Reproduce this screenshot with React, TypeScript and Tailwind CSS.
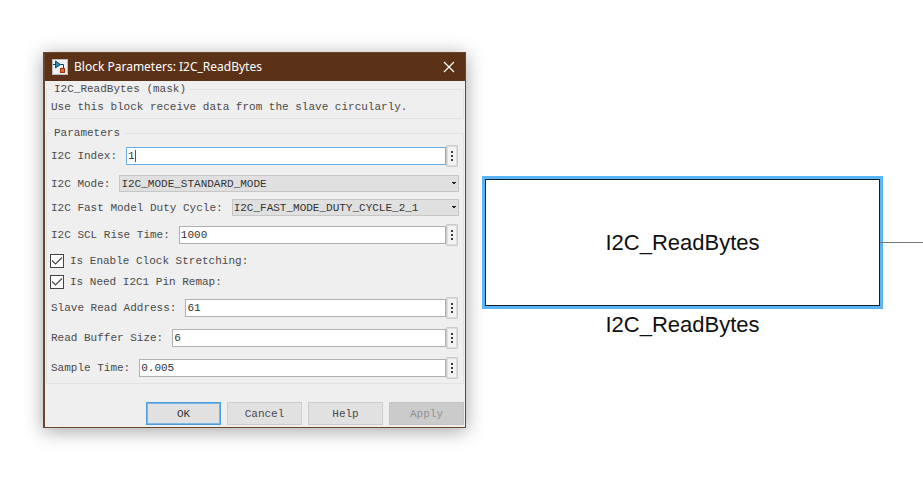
import { useState } from "react";

const MONO = "font-['Liberation_Mono',monospace] text-[11px] leading-[14px]";

function MoreButton({ label }: { label: string }) {
  return (
    <button
      type="button"
      aria-label={label}
      className="flex h-[22px] w-3 shrink-0 items-center justify-center rounded-[1px] border border-[#cbcbcb] bg-[#f3f3f3] ring-1 ring-[#dedede] ring-inset"
    >
      <svg width="4" height="12" viewBox="0 0 4 12" fill="#3a3a40">
        <rect x="1" y="1" width="2" height="2" />
        <rect x="1" y="5" width="2" height="2" />
        <rect x="1" y="9" width="2" height="2" />
      </svg>
    </button>
  );
}

function TextRow({ id, label, initial, focused }: { id: string; label: string; initial: string; focused?: boolean }) {
  const [value, setValue] = useState(initial);
  return (
    <div className="flex h-[22px] items-center gap-[9px]">
      <label htmlFor={id} className="shrink-0">
        {label}
      </label>
      <div className="flex min-w-0 flex-1 items-center pr-px">
        <div
          className={`flex h-[18px] min-w-0 flex-1 items-center border bg-white pl-px ${
            focused ? "border-[#6aaee6]" : "border-[#b0b0b0]"
          }`}
        >
          <input
            id={id}
            value={value}
            onChange={(e) => setValue(e.target.value)}
            size={1}
            className={`min-w-0 bg-transparent text-[#333] outline-none ${focused ? "w-[7px]" : "flex-1"}`}
          />
          {focused && <span className="h-3 w-px bg-[#555]" />}
        </div>
        <MoreButton label={`${label} options`} />
      </div>
    </div>
  );
}

function SelectRow({ id, label, value }: { id: string; label: string; value: string }) {
  return (
    <div className="flex h-[17px] items-center gap-[9px]">
      <label htmlFor={id} className="shrink-0">
        {label}
      </label>
      <div className="relative h-[17px] min-w-0 flex-1">
        <select
          id={id}
          defaultValue={value}
          className="block h-full w-full appearance-none border border-[#c6c6c6] bg-[#e0e0e0] pl-px text-[#333]"
        >
          <option>{value}</option>
        </select>
        <svg className="pointer-events-none absolute top-[7px] right-[3px]" width="4" height="2" viewBox="0 0 4 2" fill="#222">
          <path d="M0 0h4v1H3v1H1V1H0z" />
        </svg>
      </div>
    </div>
  );
}

function CheckRow({ label }: { label: string }) {
  return (
    <label className="-ml-px flex h-[14px] items-center gap-[6px]">
      <span className="relative size-[14px]">
        <input
          type="checkbox"
          defaultChecked
          className="peer block size-full appearance-none border border-[#444] bg-white"
        />
        <svg
          className="pointer-events-none absolute inset-0 hidden peer-checked:block"
          width="14"
          height="14"
          viewBox="0 0 14 14"
          fill="none"
          stroke="#444"
          strokeWidth="1.100"
        >
          <path d="M2 6.500l3.500 3.500L12 3.500" />
        </svg>
      </span>
      {label}
    </label>
  );
}

function BlockIcon() {
  return (
    <svg width="16" height="16" viewBox="0 0 16 16">
      <rect width="16" height="16" fill="#b9bdc0" />
      <rect x="1" y="1" width="14" height="14" fill="#f1f2f3" />
      <path d="M1 5.500h2M8 5.500h3.500V9" fill="none" stroke="#1f3d55" />
      <path d="M3.500 2l5 3.500-5 3.500z" fill="#2588c0" stroke="#144d78" />
      <rect x="8.500" y="9.500" width="4" height="4" fill="#ee6a35" stroke="#a82d0c" />
    </svg>
  );
}

const BUTTON = "h-[23px] w-[75px] border text-center";

function ParametersDialog() {
  return (
    <section
      aria-label="Block Parameters"
      className="w-[423px] shrink-0 border border-l-2 border-[#6b452c] bg-[#efefef] shadow-[0_3px_18px_rgba(0,0,0,0.36)]"
    >
      <header className="flex h-7 items-center bg-[#5b3217] pr-[10px] pl-[7px] text-white">
        <BlockIcon />
        <h1 className="ml-[6px] flex-1 font-['Noto_Sans',sans-serif] text-[12px] leading-5">
          Block Parameters: I2C_ReadBytes
        </h1>
        <button type="button" aria-label="Close">
          <svg width="12" height="12" viewBox="0 0 12 12" fill="none" stroke="white" strokeWidth="1.200">
            <path d="M1 1l10 10M11 1L1 11" />
          </svg>
        </button>
      </header>
      <form className={`${MONO} px-px pt-px pb-[2px] text-[#4a4a4a]`} onSubmit={(e) => e.preventDefault()}>
        <fieldset className="border border-[#e2e2e2] pb-1 pl-1">
          <legend className="px-[3px]">I2C_ReadBytes (mask)</legend>
          <p className="pt-1">Use this block receive data from the slave circularly.</p>
        </fieldset>
        <fieldset className="mt-[7px] border border-[#e2e2e2] pr-1 pb-1 pl-1">
          <legend className="px-[3px]">Parameters</legend>
          <div className="flex flex-col gap-2 pt-[5px]">
            <TextRow id="index" label="I2C Index:" initial="1" focused />
            <div className="flex flex-col gap-[7px]">
              <SelectRow id="mode" label="I2C Mode:" value="I2C_MODE_STANDARD_MODE" />
              <SelectRow id="duty" label="I2C Fast Model Duty Cycle:" value="I2C_FAST_MODE_DUTY_CYCLE_2_1" />
            </div>
            <TextRow id="rise" label="I2C SCL Rise Time:" initial="1000" />
            <div className="flex flex-col gap-[7px]">
              <CheckRow label="Is Enable Clock Stretching:" />
              <CheckRow label="Is Need I2C1 Pin Remap:" />
            </div>
            <TextRow id="address" label="Slave Read Address:" initial="61" />
            <TextRow id="buffer" label="Read Buffer Size:" initial="6" />
            <TextRow id="sample" label="Sample Time:" initial="0.005" />
          </div>
        </fieldset>
        <div className="mt-[18px] flex justify-end gap-[6px]">
          <button type="submit" className={`${BUTTON} border-[#4f9bd8] bg-[#e1e1e1] text-[#333] ring-1 ring-[#7bb8e8] ring-inset`}>
            OK
          </button>
          <button type="button" className={`${BUTTON} border-[#cdcdcd] bg-[#e1e1e1]`}>
            Cancel
          </button>
          <button type="button" className={`${BUTTON} border-[#cdcdcd] bg-[#e1e1e1]`}>
            Help
          </button>
          <button type="button" disabled className={`${BUTTON} border-[#c4c4c4] bg-[#cbcbcb] text-[#919191]`}>
            Apply
          </button>
        </div>
      </form>
    </section>
  );
}

export default function App() {
  return (
    <main className="flex min-h-screen items-start bg-white pt-[52px] pb-14 pl-[43px]">
      <ParametersDialog />
      <div className="flex min-w-0 flex-1 pt-[127px] pl-[19px] font-['Liberation_Sans',Arial,sans-serif] text-[22px] leading-6 text-[#111]">
        <figure className="min-w-0 flex-1">
          <div className="flex h-[127px] items-center justify-center border border-[#10202c] ring-3 ring-[#5ab4f5]">
            I2C_ReadBytes
          </div>
          <figcaption className="pt-[7px] text-center">I2C_ReadBytes</figcaption>
        </figure>
        <div className="mt-[63px] h-px w-[43px] shrink-0 bg-[#777]" />
      </div>
    </main>
  );
}
